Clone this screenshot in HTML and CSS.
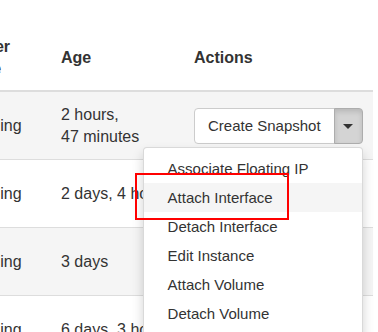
FILE: index.html
```html
<!DOCTYPE html>
<html lang="en">
<head>
    <meta charset="UTF-8">
    <meta name="viewport" content="width=device-width, initial-scale=1.0">
    <title>Instances</title>
    <link rel="stylesheet" href="styles.css">
</head>
<body>

    <!-- INSTANCES TABLE (scrolled to the right) -->
    <table class="table table-striped">
        <colgroup>
            <col class="col-state">
            <col class="col-age">
            <col class="col-actions">
        </colgroup>
        <thead>
            <tr>
                <th>Power State</th>
                <th>Age</th>
                <th>Actions</th>
            </tr>
        </thead>
        <tbody>
            <tr>
                <td>Running</td>
                <td>2&nbsp;hours, 47&nbsp;minutes</td>
                <td>
                    <div class="btn-group open">
                        <button class="btn">Create Snapshot</button>
                        <button class="btn dropdown-toggle"><span class="caret"></span></button>

                        <ul class="dropdown-menu">
                            <li><a href="#">Associate Floating IP</a></li>
                            <li class="hover"><a href="#">Attach Interface</a></li>
                            <li><a href="#">Detach Interface</a></li>
                            <li><a href="#">Edit Instance</a></li>
                            <li><a href="#">Attach Volume</a></li>
                            <li><a href="#">Detach Volume</a></li>
                            <li><a href="#">Update Metadata</a></li>
                            <li><a href="#">Edit Security Groups</a></li>
                        </ul>

                        <!-- annotation box -->
                        <div class="highlight-box"></div>
                    </div>
                </td>
            </tr>
            <tr>
                <td>Running</td>
                <td>2&nbsp;days, 4&nbsp;hours</td>
                <td>
                    <div class="btn-group">
                        <button class="btn">Create Snapshot</button>
                        <button class="btn dropdown-toggle"><span class="caret"></span></button>
                    </div>
                </td>
            </tr>
            <tr>
                <td>Running</td>
                <td>3&nbsp;days</td>
                <td>
                    <div class="btn-group">
                        <button class="btn">Create Snapshot</button>
                        <button class="btn dropdown-toggle"><span class="caret"></span></button>
                    </div>
                </td>
            </tr>
            <tr>
                <td>Running</td>
                <td>6&nbsp;days, 3&nbsp;hours</td>
                <td>
                    <div class="btn-group">
                        <button class="btn">Create Snapshot</button>
                        <button class="btn dropdown-toggle"><span class="caret"></span></button>
                    </div>
                </td>
            </tr>
        </tbody>
    </table>

</body>
</html>
```

FILE: styles.css
```css
* { margin: 0; padding: 0; box-sizing: border-box; }

html, body {
    overflow: hidden;
}

body {
    background: white;
    color: #333;
    font-family: 'Liberation Sans', Arial, sans-serif;
    font-size: 16px;
    line-height: 22px;
}

/* table is scrolled so the first columns sit off screen */
.table {
    border-collapse: collapse;
    table-layout: fixed;
    width: 419px;
    margin-top: 26px;
    margin-left: -46px;
}

.col-state { width: 99px; }
.col-age { width: 133px; }
.col-actions { width: 187px; }

.table th {
    text-align: left;
    font-weight: bold;
    vertical-align: middle;
    padding: 10px 8px;
    border-bottom: 2px solid #ddd;
}

.table td {
    text-align: left;
    vertical-align: middle;
    padding: 8px;
    border-bottom: 1px solid #ddd;
}

.table-striped tbody tr:nth-child(odd) td {
    background: #f5f5f5;
}

/* split button */
.btn-group {
    position: relative;
    display: flex;
    width: max-content;
    margin: 8px 0 7px;
}

.btn {
    font-family: 'Liberation Sans', Arial, sans-serif;
    font-size: 15px;
    line-height: 22px;
    color: #333;
    background: white;
    border: 1px solid #ccc;
    padding: 6px 13px;
    border-radius: 4px 0 0 4px;
    cursor: pointer;
}

.dropdown-toggle {
    width: 29px;
    padding: 6px 0;
    margin-left: -1px;
    border-radius: 0 4px 4px 0;
    display: flex;
    align-items: center;
    justify-content: center;
}

.open .dropdown-toggle {
    background: #d4d4d4;
    border-color: #adadad;
    box-shadow: inset 0 3px 5px rgba(0, 0, 0, 0.125);
}

.caret {
    display: inline-block;
    width: 0;
    height: 0;
    border-top: 5px solid #333;
    border-left: 5px solid transparent;
    border-right: 5px solid transparent;
}

/* menu */
.dropdown-menu {
    position: absolute;
    top: calc(100% + 3px);
    right: 0;
    z-index: 1000;
    min-width: 220px;
    list-style: none;
    padding: 6px 0;
    background: white;
    border: 1px solid rgba(0, 0, 0, 0.15);
    border-radius: 4px;
    box-shadow: 0 6px 12px rgba(0, 0, 0, 0.175);
}

.dropdown-menu a {
    display: block;
    padding: 4px 24px;
    font-size: 15px;
    line-height: 21px;
    color: #333;
    text-decoration: none;
    white-space: nowrap;
}

.dropdown-menu .hover a {
    background: #f5f5f5;
}

/* red annotation drawn on the screenshot */
.highlight-box {
    position: absolute;
    top: 65px;
    left: -59px;
    width: 154px;
    height: 47px;
    border: 2px solid red;
    z-index: 1001;
}
```
